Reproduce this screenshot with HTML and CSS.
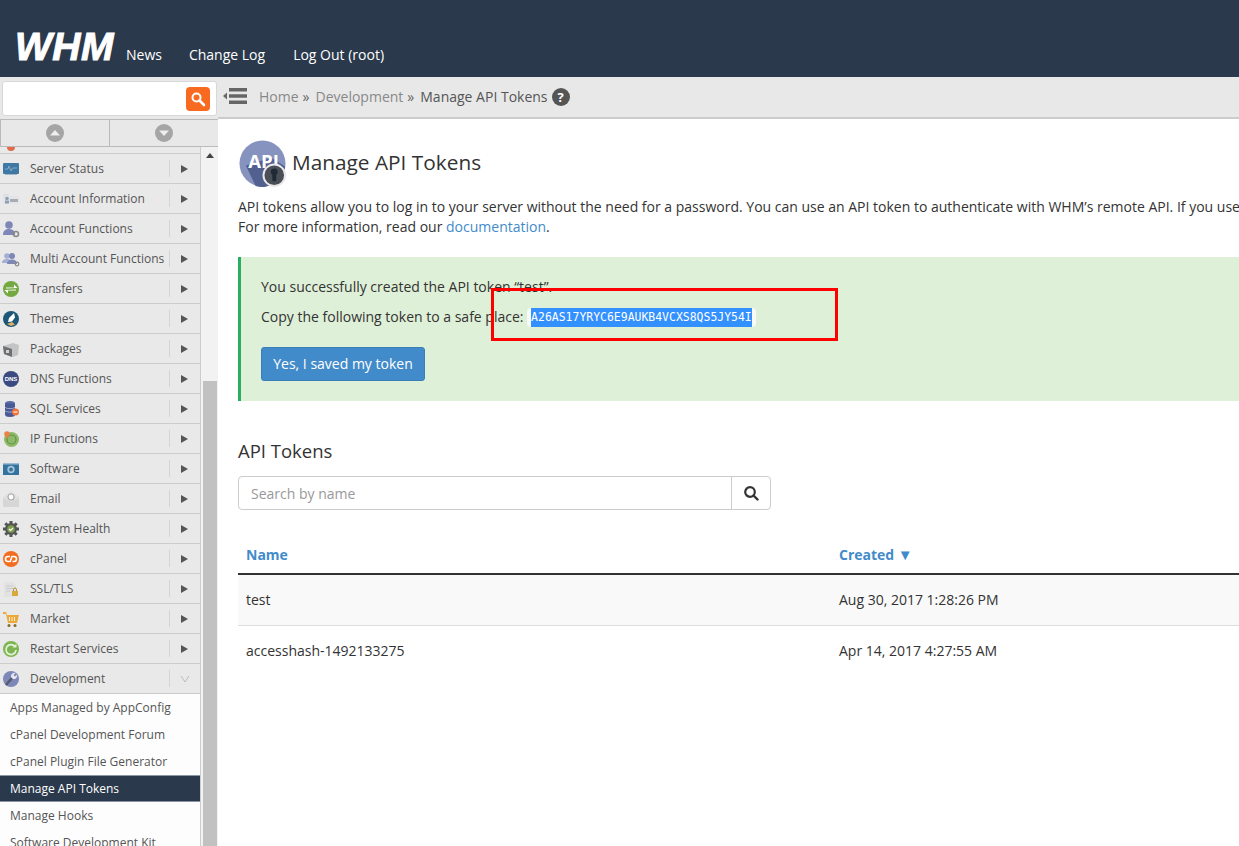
FILE: index.html
```html
<!DOCTYPE html>
<html lang="en">
<head>
<meta charset="utf-8">
<title>Manage API Tokens</title>
<link rel="stylesheet" href="styles.css">
</head>
<body>
<header class="topbar">
  <span class="logo">WHM</span>
  <nav class="topnav">
    <a class="topnav-news">News</a>
    <a class="topnav-log">Change Log</a>
    <a class="topnav-out">Log Out (root)</a>
  </nav>
</header>
<div class="shell">
  <aside class="side">
    <div class="side-search">
      <div class="side-input">
        <span class="side-go">
          <svg width="16" height="16" viewBox="0 0 16 16"><circle cx="6.5" cy="6.5" r="4" fill="none" stroke="#fff" stroke-width="2"/><path d="M9.5 9.5L14 14" stroke="#fff" stroke-width="2.6" stroke-linecap="round"/></svg>
        </span>
      </div>
    </div>
    <div class="pager">
      <div class="pager-cell"><svg width="20" height="20" viewBox="0 0 20 20"><circle cx="10" cy="10" r="9" fill="#a5a5a5"/><path d="M5 12.5L10 7l5 5.5z" fill="#eee"/></svg></div>
      <div class="pager-cell"><svg width="20" height="20" viewBox="0 0 20 20"><circle cx="10" cy="10" r="9" fill="#a5a5a5"/><path d="M5 7.5L10 13l5-5.5z" fill="#eee"/></svg></div>
    </div>
    <div class="side-scroll">
      <div class="side-list">
        <div class="row-clip"><svg width="18" height="6" viewBox="0 0 18 6"><path d="M5 0h8a4 4 0 0 1-8 0z" fill="#e2694a"/></svg></div>
        <div class="row"><svg class="ico" viewBox="0 0 18 18"><rect x="1" y="3" width="16" height="11" rx="1" fill="#3f78a3"/><path d="M3 9h3l1-3 2 5 1.500-3H15" fill="none" stroke="#7fa9c8" stroke-width="1"/><rect x="3" y="14" width="12" height="1" fill="#9db6c8"/></svg><span class="row-label">Server Status</span><span class="row-arrow"></span></div>
        <div class="row"><svg class="ico" viewBox="0 0 18 18"><rect x="1" y="4" width="6" height="2" fill="#dcdfe3"/><rect x="1" y="6" width="16" height="8" fill="#e2e4e7"/><rect x="8" y="9" width="8" height="3" fill="#a6adb5"/><circle cx="5" cy="8.500" r="1.800" fill="#8ba0b6"/><rect x="3" y="10.500" width="4" height="3" fill="#8ba0b6"/></svg><span class="row-label">Account Information</span><span class="row-arrow"></span></div>
        <div class="row"><svg class="ico" viewBox="0 0 18 18"><circle cx="7" cy="5" r="3.800" fill="#7d87b8"/><path d="M1 15c0-5 3-6 6-6s5 1 6 4v2z" fill="#7d87b8"/><circle cx="14" cy="14" r="2.500" fill="none" stroke="#888" stroke-width="1.500"/></svg><span class="row-label">Account Functions</span><span class="row-arrow"></span></div>
        <div class="row"><svg class="ico" viewBox="0 0 18 18"><circle cx="5" cy="6" r="2.800" fill="#a6aed2"/><path d="M0 13c0-3 2-4 5-4s4 1 4 4z" fill="#a6aed2"/><circle cx="10" cy="6" r="3" fill="#7d87b8"/><path d="M5 14c0-3 2-4.500 5-4.500s5 1.500 5 4.500z" fill="#7d87b8"/><circle cx="15" cy="14" r="1.800" fill="none" stroke="#888" stroke-width="1.200"/></svg><span class="row-label">Multi Account Functions</span><span class="row-arrow"></span></div>
        <div class="row"><svg class="ico" viewBox="0 0 18 18"><circle cx="9" cy="9" r="8" fill="#74a841"/><path d="M4 7.500h8V4.500L15.500 8 4 8.500zM14 10.500H6v3L2.500 10 14 9.500z" fill="#fff"/></svg><span class="row-label">Transfers</span><span class="row-arrow"></span></div>
        <div class="row"><svg class="ico" viewBox="0 0 18 18"><circle cx="9" cy="9" r="8" fill="#1d5778"/><path d="M12 3L7 8l-1 4 4-.5 3-4z" fill="#fff"/><path d="M5 14l5-2 3 2.500-4 1.500z" fill="#e0b060"/></svg><span class="row-label">Themes</span><span class="row-arrow"></span></div>
        <div class="row"><svg class="ico" viewBox="0 0 18 18"><path d="M1 6l10-3 6 2-1 10-5 2-9-3z" fill="#c4c4c4"/><path d="M1 6l9 3v8l-8-3z" fill="#6d7072"/><rect x="4" y="10" width="3" height="3" fill="#d0d0d0"/></svg><span class="row-label">Packages</span><span class="row-arrow"></span></div>
        <div class="row"><svg class="ico" viewBox="0 0 18 18"><circle cx="9" cy="9" r="8" fill="#3b4a80"/><text x="9" y="11" class="ico-text">DNS</text></svg><span class="row-label">DNS Functions</span><span class="row-arrow"></span></div>
        <div class="row"><svg class="ico" viewBox="0 0 18 18"><ellipse cx="8" cy="3.500" rx="5" ry="2.500" fill="#5a6ba5"/><rect x="3" y="3.500" width="10" height="11" fill="#4a5a94"/><ellipse cx="8" cy="14.500" rx="5" ry="2.500" fill="#4a5a94"/><path d="M3 7.500c2 1.500 8 1.500 10 0M3 11c2 1.500 8 1.500 10 0" stroke="#9aa5cc" fill="none"/><circle cx="13.500" cy="12" r="3.500" fill="#f0743a"/><rect x="11.500" y="11.500" width="4" height="1" fill="#fff"/></svg><span class="row-label">SQL Services</span><span class="row-arrow"></span></div>
        <div class="row"><svg class="ico" viewBox="0 0 18 18"><circle cx="9.500" cy="9.500" r="7.500" fill="#8fb96a"/><circle cx="9.500" cy="9.500" r="4.500" fill="none" stroke="#5f9440" stroke-width="1.200"/><circle cx="5" cy="4" r="2.800" fill="#e8824a"/><path d="M3 5l2 4 2-4z" fill="#e8824a"/></svg><span class="row-label">IP Functions</span><span class="row-arrow"></span></div>
        <div class="row"><svg class="ico" viewBox="0 0 18 18"><rect x="1" y="3" width="16" height="12" fill="#33739f"/><rect x="1" y="3" width="16" height="1.500" fill="#9bbcd3"/><circle cx="9" cy="9.500" r="2.800" fill="none" stroke="#a6c3d8" stroke-width="1.800"/></svg><span class="row-label">Software</span><span class="row-arrow"></span></div>
        <div class="row"><svg class="ico" viewBox="0 0 18 18"><path d="M1 7l8-6 8 6v10H1z" fill="#e0e0e0"/><path d="M1 8l8 4 8-4v9H1z" fill="#d6d6d6"/><circle cx="9" cy="7" r="3" fill="#fff" stroke="#a9a9a9" stroke-width="1.200"/></svg><span class="row-label">Email</span><span class="row-arrow"></span></div>
        <div class="row"><svg class="ico" viewBox="0 0 18 18"><circle cx="9" cy="9" r="6" fill="#555"/><path d="M9 1v16M1 9h16M3.300 3.300l11.400 11.400M14.700 3.300L3.300 14.700" stroke="#555" stroke-width="3"/><circle cx="9" cy="9" r="3.800" fill="#7ea04c"/><path d="M7 9l1.500 1.500L11 8" stroke="#fff" fill="none" stroke-width="1.200"/></svg><span class="row-label">System Health</span><span class="row-arrow"></span></div>
        <div class="row"><svg class="ico" viewBox="0 0 18 18"><circle cx="9" cy="9" r="8" fill="#f36d21"/><path d="M8 6.500H6a2.500 2.500 0 0 0 0 5h1.500M8 12l2-5.500h2a2.500 2.500 0 0 1 0 5h-1.500" fill="none" stroke="#fff" stroke-width="1.600"/></svg><span class="row-label">cPanel</span><span class="row-arrow"></span></div>
        <div class="row"><svg class="ico" viewBox="0 0 18 18"><path d="M2 2h9l3 3v12H2z" fill="#e2e2e2"/><path d="M4 6h7M4 8.500h7M4 11h4" stroke="#cacaca"/><rect x="10" y="11" width="6" height="5" fill="#d6a93a"/><path d="M11.500 11V9.500a1.500 1.500 0 0 1 3 0V11" fill="none" stroke="#b08a2a"/></svg><span class="row-label">SSL/TLS</span><span class="row-arrow"></span></div>
        <div class="row"><svg class="ico" viewBox="0 0 18 18"><path d="M1 2h3l1 3h12l-2 8H6L4 4H1z" fill="#eba93c"/><path d="M7.500 7v4M10 7v4M12.500 7v4" stroke="#fff" stroke-width=".8"/><circle cx="7" cy="15.500" r="1.500" fill="#8a6a2a"/><circle cx="13" cy="15.500" r="1.500" fill="#8a6a2a"/></svg><span class="row-label">Market</span><span class="row-arrow"></span></div>
        <div class="row"><svg class="ico" viewBox="0 0 18 18"><circle cx="9" cy="9" r="8" fill="#7cb551"/><path d="M13 6.500A5 5 0 1 0 14 10" fill="none" stroke="#e4f0d8" stroke-width="1.800"/><path d="M14.500 3.500v4h-4z" fill="#e4f0d8"/></svg><span class="row-label">Restart Services</span><span class="row-arrow"></span></div>
        <div class="row"><svg class="ico" viewBox="0 0 18 18"><circle cx="9" cy="9" r="8" fill="#7d87b8"/><path d="M4 15L10 8" stroke="#555a6e" stroke-width="2.600"/><path d="M9 7a3.500 3.500 0 0 1 4.500-4l-2 2 1.500 1.500 2-2A3.500 3.500 0 0 1 11 9z" fill="#e8e8ee"/></svg><span class="row-label">Development</span><span class="row-chev"><svg width="10" height="8" viewBox="0 0 10 8"><path d="M1 1l4 6 4-6" fill="none" stroke="#bbb"/></svg></span></div>
        <ul class="sub">
          <li>Apps Managed by AppConfig</li>
          <li>cPanel Development Forum</li>
          <li>cPanel Plugin File Generator</li>
          <li class="sub-active">Manage API Tokens</li>
          <li>Manage Hooks</li>
          <li>Software Development Kit</li>
        </ul>
      </div>
      <div class="scrollbar">
        <span class="scroll-up"></span>
        <span class="scroll-thumb"></span>
      </div>
    </div>
  </aside>
  <main class="main">
    <div class="crumbs">
      <svg class="crumb-menu" width="24" height="18" viewBox="0 0 24 18"><path d="M6 1h18v3.500H6zM6 7.300h18v3.500H6zM6 13.600h18v3.500H6z" fill="#666"/><path d="M0 9l4-3.500v7z" fill="#666"/></svg>
      <span class="crumb-link">Home</span><span class="crumb-sep">»</span>
      <span class="crumb-link crumb-dev">Development</span><span class="crumb-sep">»</span>
      <span class="crumb-now">Manage API Tokens</span>
      <span class="crumb-help">?</span>
    </div>
    <div class="content">
      <div class="title-row">
        <svg class="title-ico" viewBox="0 0 48 48">
          <circle cx="24" cy="24" r="23.500" fill="#8793bf"/>
          <path d="M7 26l26-8 14 9a23.500 23.500 0 0 1-30 20z" fill="#52608f"/>
          <text x="25" y="29" class="title-ico-text">API</text>
          <circle cx="36" cy="36" r="11" fill="#4a4f57" stroke="#e8e8e8" stroke-width="2"/>
          <circle cx="36" cy="32.500" r="3.500" fill="#1f2a36"/>
          <rect x="34" y="33" width="4" height="9" rx="1" fill="#1f2a36"/>
        </svg>
        <h1 class="title">Manage API Tokens</h1>
      </div>
      <p class="intro">API tokens allow you to log in to your server without the need for a password. You can use an API token to authenticate with WHM’s remote API. If you use<br>For more information, read our <a class="link">documentation</a>.</p>
      <section class="notice">
        <p class="notice-line">You successfully created the API token “test”.</p>
        <p class="notice-line notice-copy">Copy the following token to a safe place: <code class="token"><span class="token-sel">A26AS17YRYC6E9AUKB4VCXS8QS5JY54I</span></code></p>
        <button class="btn">Yes, I saved my token</button>
        <span class="redbox"></span>
      </section>
      <h2 class="subhead">API Tokens</h2>
      <div class="filter">
        <span class="filter-input">Search by name</span>
        <span class="filter-btn"><svg width="16" height="16" viewBox="0 0 16 16"><circle cx="7" cy="7" r="4.800" fill="none" stroke="#333" stroke-width="2.200"/><path d="M10.500 10.500L14.500 14.500" stroke="#333" stroke-width="2.400" stroke-linecap="round"/></svg></span>
      </div>
      <div class="table">
        <div class="thead"><span class="col-name">Name</span><span>Created <span class="sort">▼</span></span></div>
        <div class="trow trow-odd"><span class="col-name">test</span><span>Aug 30, 2017 1:28:26 PM</span></div>
        <div class="trow"><span class="col-name">accesshash-1492133275</span><span>Apr 14, 2017 4:27:55 AM</span></div>
      </div>
    </div>
  </main>
</div>
</body>
</html>
```
FILE: styles.css
```css
* { box-sizing: border-box; }
html, body { margin: 0; height: 846px; overflow: hidden; }
body { font-family: "Open Sans", "Liberation Sans", sans-serif; font-size: 14px; color: #333; background: #fff; display: flex; flex-direction: column; }
p, h1, h2, ul { margin: 0; padding: 0; }

.topbar { height: 77px; flex: none; background: #2a394b; display: flex; align-items: flex-end; padding: 0 0 12px 15px; color: #fff; }
.logo { font: italic bold 39px/28px "Liberation Sans", sans-serif; width: 111px; height: 32px; -webkit-text-stroke: 1px #fff; letter-spacing: .5px; }
.topnav { display: flex; gap: 27px; line-height: 20px; }
.topnav-out { margin-left: 1px; }

.shell { flex: 1; display: flex; min-height: 0; }
.side { width: 218px; flex: none; display: flex; flex-direction: column; background: #e8e8e8; }
.side-search { height: 42px; flex: none; padding: 4px 1px 3px 2px; }
.side-input { height: 35px; background: #fff; border: 1px solid #d8d8d8; border-radius: 3px; display: flex; justify-content: flex-end; align-items: center; padding-right: 6px; }
.side-go { width: 24px; height: 24px; background: #f96a21; border-radius: 4px; display: flex; align-items: center; justify-content: center; }
.pager { height: 28px; flex: none; display: flex; border: 1px solid #bbb; border-width: 1px 0 1px 1px; }
.pager-cell { flex: 1; display: flex; align-items: center; justify-content: center; border-right: 1px solid #bbb; }
.pager-cell:last-child { border-right: 0; }

.side-scroll { flex: 1; min-height: 0; display: flex; overflow: hidden; background: #f2f2f2; }
.side-list { width: 201px; flex: none; border-right: 1px solid #ccc; background: #fff; }
.row-clip { height: 7px; background: #e9e9e9; border-bottom: 1px solid #ccc; display: flex; align-items: flex-start; padding-left: 2px; overflow: hidden; }
.row { height: 30px; display: flex; align-items: center; background: #e9e9e9; border-bottom: 1px solid #ccc; padding-left: 2px; font-size: 12px; color: #555; }
.ico { width: 18px; height: 18px; flex: none; margin-right: 10px; }
.ico-text { font: bold 6px "Liberation Sans", sans-serif; fill: #fff; text-anchor: middle; }
.row-label { width: 140px; height: 17px; line-height: 17px; flex: none; white-space: nowrap; border-right: 1px solid #d4d4d4; }
.row-arrow { margin-left: 11px; width: 0; height: 0; border-left: 7px solid #555; border-top: 4px solid transparent; border-bottom: 4px solid transparent; }
.row-chev { margin-left: 10px; display: flex; }
.sub { list-style: none; background: #fdfdfd; font-size: 12px; color: #555; }
.sub li { height: 27px; line-height: 27px; padding-left: 10px; white-space: nowrap; }
.sub .sub-active { background: #2a394b; color: #fff; border-top: 1px solid #8a96a3; border-bottom: 1px solid #8a96a3; line-height: 25px; }

.scrollbar { flex: 1; position: relative; display: flex; flex-direction: column; align-items: center; }
.scroll-up { margin-top: 6px; width: 0; height: 0; border-left: 4px solid transparent; border-right: 4px solid transparent; border-bottom: 5px solid #444; }
.scroll-thumb { position: absolute; left: 2px; right: 1px; top: 234px; bottom: 0; background: #c1c1c1; }

.main { flex: 1; min-width: 0; overflow: hidden; display: flex; flex-direction: column; }
.crumbs { height: 42px; flex: none; background: #e8e8e8; border-bottom: 2px solid #ccc; display: flex; align-items: center; padding: 0 0 2px 5px; color: #888; white-space: nowrap; }
.crumb-menu { margin-right: 12px; }
.crumb-sep { color: #666; margin-left: 4px; margin-right: 6px; }
.crumb-now { color: #555; }
.crumb-help { width: 18px; height: 18px; margin: 2px 0 0 4px; border-radius: 50%; background: #555; color: #fff; font-weight: 700; font-size: 13px; line-height: 18px; text-align: center; }

.content { padding: 21px 0 0 20px; width: 1500px; }
.title-row { display: flex; align-items: flex-start; height: 48px; }
.title-ico { width: 47px; height: 47px; margin: 0 6px 0 1px; }
.title-ico-text { font: bold 19px "Open Sans", sans-serif; fill: #fff; text-anchor: middle; }
.title { font-size: 20.800px; font-weight: 400; color: #333; line-height: 44px; }
.intro { margin-top: 9px; line-height: 20px; white-space: nowrap; }
.link { color: #428bca; }

.notice { position: relative; margin-top: 20px; height: 144px; background: #dff0d8; border-left: 3px solid #27ae60; padding: 20px 0 0 20px; }
.notice-line { line-height: 20px; }
.notice-copy { margin-top: 10px; }
.token { display: inline-block; margin: 1px 0 0; padding: 0 4px; height: 19px; background: #f9f9f9; border-radius: 4px; font: 11.460px/19px "DejaVu Sans Mono", monospace; vertical-align: top; }
.token-sel { display: block; background: #3390ff; color: #fff; height: 19px; }
.btn { display: block; margin-top: 20px; width: 164px; height: 34px; background: #428bca; border: 1px solid #3a7fba; border-radius: 3px; color: #fff; font: 14px "Open Sans", sans-serif; padding: 0 0 2px; }
.redbox { position: absolute; left: 250px; top: 31px; width: 347px; height: 53px; border: 3px solid #f00; }

.subhead { margin-top: 37px; font-size: 18.500px; font-weight: 400; line-height: 26px; }
.filter { margin-top: 12px; width: 533px; height: 34px; display: flex; border: 1px solid #ccc; border-radius: 4px; }
.filter-input { flex: 1; color: #999; padding-left: 12px; line-height: 33px; border-right: 1px solid #ccc; }
.filter-btn { width: 38px; display: flex; align-items: center; justify-content: center; }

.table { margin-top: 27px; }
.thead { height: 38px; display: flex; align-items: center; padding-bottom: 2px; border-bottom: 2px solid #333; font-weight: 700; color: #428bca; }
.sort { font-size: 15px; line-height: 1; }
.trow { height: 51px; display: flex; align-items: center; border-bottom: 1px solid #ddd; padding-bottom: 2px; }
.trow:last-child { border-bottom: 0; }
.trow-odd { background: #f9f9f9; }
.col-name { width: 601px; padding-left: 8px; flex: none; }
```
